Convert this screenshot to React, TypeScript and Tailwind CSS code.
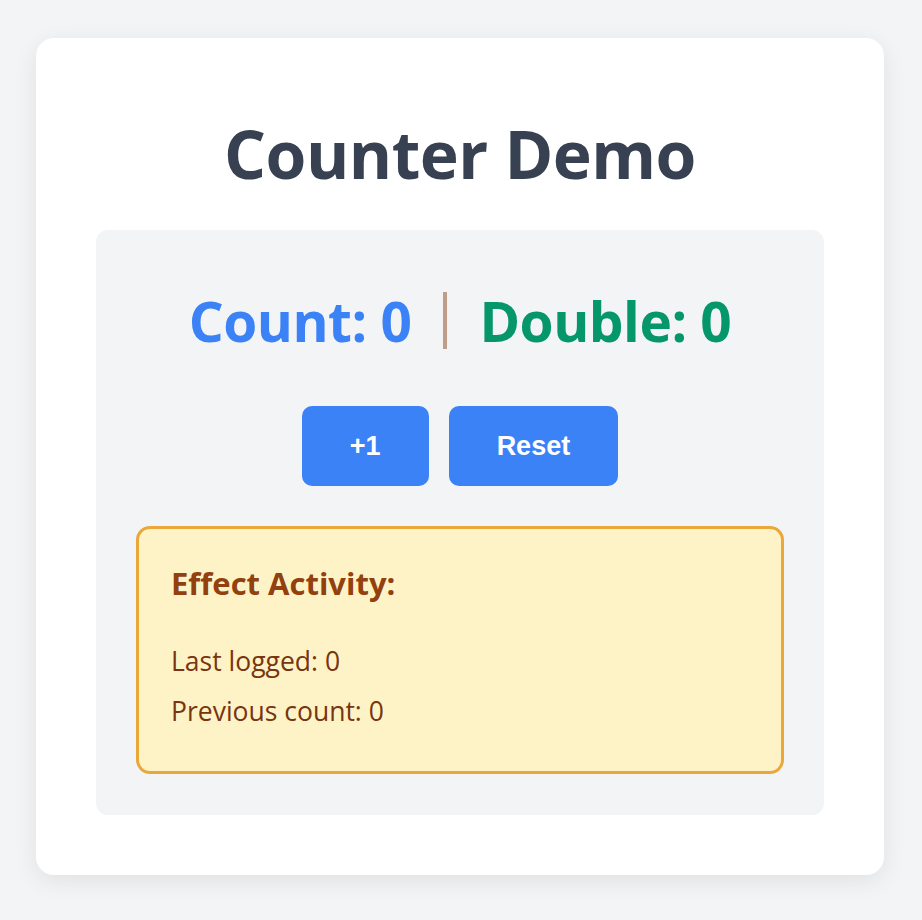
import React, { useEffect, useRef, useState } from 'react';

const ui = { fontFamily: '"Open Sans", "Noto Sans", sans-serif' };
const btn = { fontFamily: '"Liberation Sans", Arial, sans-serif' };

const App: React.FC = () => {
    const [count, setCount] = useState(0);
    const [logged, setLogged] = useState(0);
    const prev = useRef(0);

    useEffect(() => {
        setLogged(count);
        return () => {
            prev.current = count;
        };
    }, [count]);

    return (
        <div className="min-h-screen bg-[#f3f4f6] px-[36px] pt-[38px]" style={ui}>
            <div className="w-[848px] rounded-[18px] bg-white px-[60px] pb-[60px] pt-[82px] shadow-[0_6px_24px_rgba(0,0,0,0.08)]">
                <h1 className="text-center text-[66px] font-bold leading-none tracking-[-0.5px] text-[#374151]">
                    Counter Demo
                </h1>

                <div className="mt-[44px] rounded-[12px] bg-[#f3f4f6] px-[40px] pb-[41px] pt-[62px]">
                    <div className="flex items-center justify-center gap-[32px] text-[55px] font-bold leading-none tracking-[-0.5px]">
                        <span className="text-[#3b82f6]">Count: {count}</span>
                        <span className="h-[57px] w-[4px] bg-[#bf9d88]" />
                        <span className="text-[#059669]">Double: {count * 2}</span>
                    </div>

                    <div className="mt-[57px] flex justify-center gap-[20px]" style={btn}>
                        <button
                            onClick={() => setCount((c) => c + 1)}
                            className="h-[80px] rounded-[10px] bg-[#3b82f6] px-[48px] text-[27px] font-bold text-white"
                        >
                            +1
                        </button>
                        <button
                            onClick={() => setCount(0)}
                            className="h-[80px] rounded-[10px] bg-[#3b82f6] px-[48px] text-[27px] font-bold text-white"
                        >
                            Reset
                        </button>
                    </div>

                    <div className="mt-[40px] h-[248px] rounded-[14px] border-[3px] border-[#eba83a] bg-[#fef3c7] px-[32px] pt-[39px]">
                        <h3 className="text-[31px] font-bold leading-none text-[#92400e]">Effect Activity:</h3>
                        <p className="mt-[49px] text-[26.5px] leading-none text-[#78350f]">Last logged: {logged}</p>
                        <p className="mt-[23px] text-[26.5px] leading-none text-[#78350f]">Previous count: {prev.current}</p>
                    </div>
                </div>
            </div>
        </div>
    );
};

export default App;
